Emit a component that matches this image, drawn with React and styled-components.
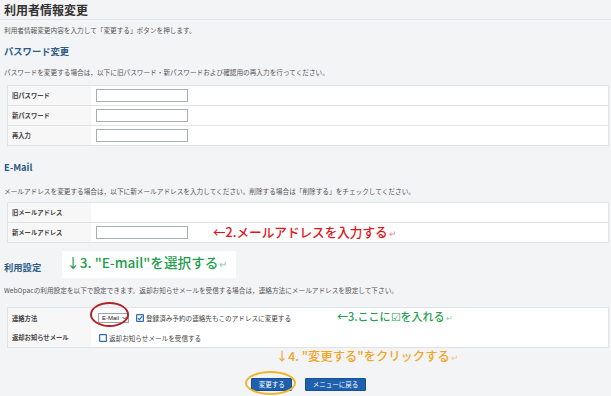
import React from "react";
import styled, { createGlobalStyle } from "styled-components";

const GlobalStyle = createGlobalStyle`
  html, body { margin: 0; padding: 0; }
  body {
    background: #f3f4f6;
    font-family: "Noto Sans CJK JP", "Noto Sans", sans-serif;
    color: #333;
    overflow: hidden;
  }
`;

const Page = styled.div`
  width: 611px;
  height: 396px;
  background: #f3f4f6;
  box-sizing: border-box;
`;

const TitleBar = styled.div`
  height: 19px;
  border-bottom: 1px solid #e1e3e7;
  padding-left: 4px;
`;

const Title = styled.h1`
  margin: 0;
  font-size: 12px;
  line-height: 19px;
  font-weight: 700;
  color: #333;
  letter-spacing: 0;
`;

const Content = styled.div`
  padding: 0 2px 0 4px;
`;

const Desc = styled.p`
  margin: ${(p) => p.$top}px 0 0 0;
  font-size: 6.65px;
  line-height: 10px;
  color: #555;
  white-space: nowrap;
`;

const Heading = styled.h2`
  margin: ${(p) => p.$top || 0}px 0 0 0;
  font-size: 9.3px;
  line-height: 12px;
  font-weight: 700;
  color: #2d5c88;
`;

const FormTable = styled.div`
  margin: ${(p) => p.$top}px 0 0 3px;
  border: 1px solid #e0e2e5;
  border-bottom: none;
  background: #fff;
`;

const Row = styled.div`
  display: grid;
  grid-template-columns: 83px 1fr;
  height: 19px;
  border-bottom: 1px solid #e0e2e5;
`;

const Label = styled.div`
  background: #f7f7f8;
  display: flex;
  align-items: center;
  padding-left: 4px;
  font-size: 6.3px;
  font-weight: 700;
  color: #444;
  white-space: nowrap;
`;

const Value = styled.div`
  display: flex;
  align-items: center;
  padding-left: 5px;
  background: #fff;
  white-space: nowrap;
`;

const TextInput = styled.div`
  width: 90px;
  height: 11px;
  border: 1px solid #a6adb4;
  background: #fff;
`;

const Annotation = styled.span`
  font-size: ${(p) => p.$size}px;
  line-height: 16px;
  color: ${(p) => p.$color};
  margin-left: ${(p) => p.$left || 0}px;
  margin-bottom: ${(p) => p.$lift || 0}px;
  font-weight: 500;
  white-space: nowrap;
`;

const Ret = styled.span`
  font-size: 0.75em;
  opacity: 0.55;
  margin-left: 1px;
`;

const SettingsHead = styled.div`
  margin-top: 8px;
  height: 27px;
  display: flex;
  align-items: flex-end;
`;

const SettingsHeading = styled(Heading)`
  margin-bottom: 5px;
`;

const NoteBox = styled.div`
  margin-left: 21px;
  width: 174px;
  height: 27px;
  background: #fff;
  display: flex;
  align-items: center;
  padding-left: 4px;
  padding-bottom: 3px;
  box-sizing: border-box;
`;

const SelectWrap = styled.span`
  position: relative;
  margin-left: 2px;
  display: inline-flex;
`;

const SelectBox = styled.span`
  width: 31px;
  height: 10px;
  box-sizing: border-box;
  border: 1px solid #9aa1a8;
  background: #fff;
  display: flex;
  align-items: center;
  padding-left: 3px;
  font-size: 6px;
  color: #222;
  font-family: "Liberation Sans", sans-serif;
  gap: 3px;
`;

const Ellipse = styled.span`
  position: absolute;
  left: ${(p) => p.$l}px;
  top: ${(p) => p.$t}px;
  width: ${(p) => p.$w}px;
  height: ${(p) => p.$h}px;
  border: ${(p) => p.$stroke}px solid ${(p) => p.$color};
  border-radius: 50%;
  box-sizing: border-box;
  pointer-events: none;
`;

const CheckText = styled.span`
  font-size: 6.6px;
  color: #444;
  margin-left: 2px;
`;

const BoxIcon = styled.svg`
  width: 8px;
  height: 8px;
  margin-left: ${(p) => p.$left || 0}px;
  flex: none;
`;

const Check = ({ checked, left }) => (
  <BoxIcon $left={left} viewBox="0 0 8 8">
    <rect x="0.6" y="0.6" width="6.8" height="6.8" fill="#fff" stroke="#2f6db5" strokeWidth="1.2" rx="0.5" />
    {checked && (
      <path d="M1.8 4.1 L3.4 5.7 L6.3 2.1" fill="none" stroke="#2f6db5" strokeWidth="1.2" />
    )}
  </BoxIcon>
);

const OrangeLine = styled.div`
  padding-left: 272px;
  height: 16px;
  display: flex;
  align-items: center;
`;

const ButtonRow = styled.div`
  margin-top: 14px;
  display: flex;
  justify-content: center;
  gap: 13px;
  padding-left: 4px;
`;

const ButtonMark = styled.span`
  position: relative;
  display: inline-flex;
`;

const Button = styled.button`
  height: 13px;
  padding: 0 6.5px;
  border: 1px solid #174f94;
  background: #1f60ae;
  color: #fff;
  font-family: "Noto Sans CJK JP", sans-serif;
  font-size: 6.5px;
  line-height: 11px;
  border-radius: 1px;
  cursor: pointer;
`;

export default function App() {
  return (
    <>
      <GlobalStyle />
      <Page>
        <TitleBar>
          <Title>利用者情報変更</Title>
        </TitleBar>
        <Content>
          <Desc $top={5}>利用者情報変更内容を入力して「変更する」ボタンを押します。</Desc>

          <Heading $top={10}>パスワード変更</Heading>
          <Desc $top={10}>
            パスワードを変更する場合は，以下に旧パスワード・新パスワードおよび確認用の再入力を行ってください。
          </Desc>
          <FormTable $top={8}>
            <Row>
              <Label>旧パスワード</Label>
              <Value><TextInput /></Value>
            </Row>
            <Row>
              <Label>新パスワード</Label>
              <Value><TextInput /></Value>
            </Row>
            <Row>
              <Label>再入力</Label>
              <Value><TextInput /></Value>
            </Row>
          </FormTable>

          <Heading $top={15}>E-Mail</Heading>
          <Desc $top={13}>
            メールアドレスを変更する場合は，以下に新メールアドレスを入力してください。削除する場合は「削除する」をチェックしてください。
          </Desc>
          <FormTable $top={6}>
            <Row>
              <Label>旧メールアドレス</Label>
              <Value />
            </Row>
            <Row>
              <Label>新メールアドレス</Label>
              <Value>
                <TextInput />
                <Annotation $size={12.6} $color="#e3131b" $left={25}>
                  ←2.メールアドレスを入力する<Ret>↵</Ret>
                </Annotation>
              </Value>
            </Row>
          </FormTable>

          <SettingsHead>
            <SettingsHeading>利用設定</SettingsHeading>
            <NoteBox>
              <Annotation $size={13.6} $color="#1f9e4c">
                ↓3. "E-mail"を選択する<Ret>↵</Ret>
              </Annotation>
            </NoteBox>
          </SettingsHead>
          <Desc $top={7}>
            WebOpacの利用設定を以下で設定できます。返却お知らせメールを受信する場合は，連絡方法にメールアドレスを設定して下さい。
          </Desc>
          <FormTable $top={12}>
            <Row>
              <Label>連絡方法</Label>
              <Value>
                <SelectWrap>
                  <SelectBox>
                    E-Mail
                    <svg width="5" height="4" viewBox="0 0 5 4">
                      <path d="M0.5 1 L2.5 3 L4.5 1" fill="none" stroke="#555" strokeWidth="1" />
                    </svg>
                  </SelectBox>
                  <Ellipse $l={-8} $t={-11} $w={39} $h={25} $stroke={2} $color="#b3232a" />
                </SelectWrap>
                <Check checked left={7} />
                <CheckText>登録済み予約の連絡先もこのアドレスに変更する</CheckText>
                <Annotation $size={11} $color="#1f9e4c" $left={46} $lift={3}>
                  ←3.ここに☑を入れる<Ret>↵</Ret>
                </Annotation>
              </Value>
            </Row>
            <Row>
              <Label>返却お知らせメール</Label>
              <Value>
                <Check left={3} />
                <CheckText>返却お知らせメールを受信する</CheckText>
              </Value>
            </Row>
          </FormTable>

          <OrangeLine>
            <Annotation $size={12.3} $color="#f2a51f">
              ↓4. "変更する"をクリックする<Ret>↵</Ret>
            </Annotation>
          </OrangeLine>
          <ButtonRow>
            <ButtonMark>
              <Button>変更する</Button>
              <Ellipse $l={-6} $t={-7} $w={51} $h={24} $stroke={2.5} $color="#f0b52a" />
            </ButtonMark>
            <Button>メニューに戻る</Button>
          </ButtonRow>
        </Content>
      </Page>
    </>
  );
}
